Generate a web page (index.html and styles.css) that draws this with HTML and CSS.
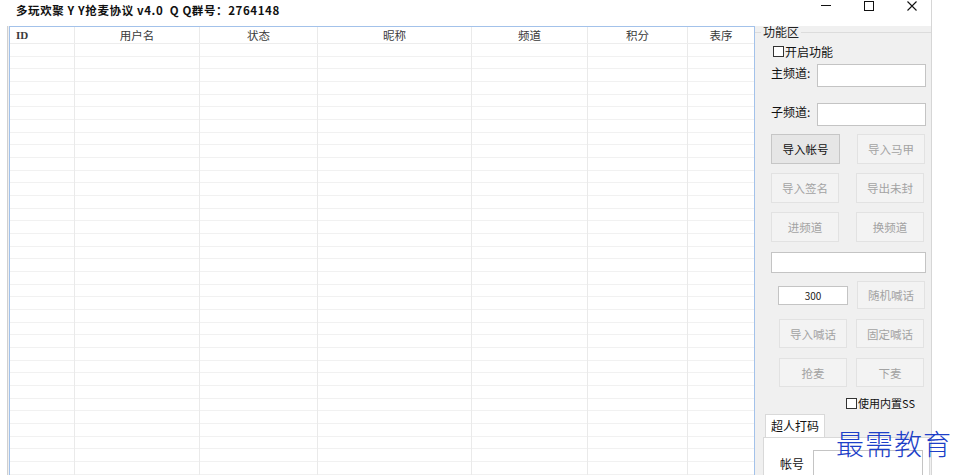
FILE: index.html
```html
<!DOCTYPE html>
<html lang="zh-CN">
<head>
    <meta charset="UTF-8">
    <title>多玩欢聚 YY抢麦协议 v4.0</title>
    <link rel="stylesheet" href="styles.css">
</head>
<body>
    <div class="window">
        <div class="titlebar">
            <div class="title">多玩欢聚 Y Y抢麦协议 v4.0&nbsp; Q Q群号：2764148</div>
            <div class="win-controls">
                <svg class="win-icon" width="10" height="10" viewBox="0 0 10 10"><path d="M0 4.5H10" stroke="#111" stroke-width="1"/></svg>
                <svg class="win-icon" width="10" height="10" viewBox="0 0 10 10"><rect x="0.5" y="0.5" width="9" height="9" fill="none" stroke="#111" stroke-width="1"/></svg>
                <svg class="win-icon" width="10" height="10" viewBox="0 0 10 10"><path d="M0.5 0.5L9.5 9.5M9.5 0.5L0.5 9.5" stroke="#111" stroke-width="1.1"/></svg>
            </div>
        </div>

        <div class="client">
            <div class="list">
                <div class="list-head">
                    <div class="col c-id head-id">ID</div>
                    <div class="col c-user">用户名</div>
                    <div class="col c-state">状态</div>
                    <div class="col c-nick">昵称</div>
                    <div class="col c-chan">频道</div>
                    <div class="col c-score">积分</div>
                    <div class="col c-order">表序</div>
                </div>
                <div class="list-body">
                    <div class="col c-id"></div>
                    <div class="col c-user"></div>
                    <div class="col c-state"></div>
                    <div class="col c-nick"></div>
                    <div class="col c-chan"></div>
                    <div class="col c-score"></div>
                    <div class="col c-order"></div>
                </div>
            </div>

            <div class="panel">
                <fieldset class="group">
                    <legend>功能区</legend>

                    <div class="check-row"><span class="box"></span>开启功能</div>

                    <div class="field-row">
                        <span class="field-label">主频道:</span>
                        <span class="textbox tb-field"></span>
                    </div>
                    <div class="field-row row-gap">
                        <span class="field-label">子频道:</span>
                        <span class="textbox tb-field"></span>
                    </div>

                    <div class="btn-row first">
                        <button class="btn on">导入帐号</button>
                        <button class="btn" disabled>导入马甲</button>
                    </div>
                    <div class="btn-row">
                        <button class="btn" disabled>导入签名</button>
                        <button class="btn" disabled>导出未封</button>
                    </div>
                    <div class="btn-row">
                        <button class="btn" disabled>进频道</button>
                        <button class="btn" disabled>换频道</button>
                    </div>

                    <span class="textbox tb-wide"></span>

                    <div class="btn-row shout">
                        <span class="textbox tb-num">300</span>
                        <button class="btn" disabled>随机喊话</button>
                    </div>
                    <div class="btn-row inset">
                        <button class="btn" disabled>导入喊话</button>
                        <button class="btn" disabled>固定喊话</button>
                    </div>
                    <div class="btn-row inset">
                        <button class="btn" disabled>抢麦</button>
                        <button class="btn" disabled>下麦</button>
                    </div>

                    <div class="check-row ss"><span class="box"></span>使用内置SS</div>
                </fieldset>

                <div class="tabs">
                    <div class="tab">超人打码</div>
                </div>
                <div class="tab-page">
                    <div class="field-row">
                        <span class="field-label short">帐号</span>
                        <span class="textbox tb-account"></span>
                    </div>
                </div>
            </div>
        </div>
    </div>

    <div class="watermark">最需教育</div>
</body>
</html>
```

FILE: styles.css
```css
* {
    box-sizing: border-box;
}

body {
    margin: 0;
    width: 958px;
    height: 475px;
    overflow: hidden;
    background: #fff;
    font-family: "Noto Sans CJK SC", "Liberation Sans", sans-serif;
    font-size: 12px;
    color: #222;
    position: relative;
}

.window {
    margin-left: 7px;
    width: 925px;
    height: 475px;
    border-right: 1px solid #d6d6d6;
    display: flex;
    flex-direction: column;
}

/* title bar */
.titlebar {
    height: 26px;
    display: flex;
    justify-content: space-between;
    align-items: flex-start;
    background: #fff;
}

.title {
    padding: 3px 0 0 9px;
    font-size: 11.5px;
    font-weight: bold;
    line-height: 14px;
    letter-spacing: 0.6px;
    color: #111;
}

.win-controls {
    display: flex;
    gap: 33px;
    padding: 1px 14px 0 0;
}

.win-icon {
    display: block;
    margin-top: 0;
}

/* client area */
.client {
    flex: 1;
    display: flex;
    border-left: 1px solid #d0d0d0;
    background: #f0f0f0;
    min-height: 0;
}

.list {
    width: 746px;
    margin-left: 1px;
    border: 1px solid #a3c2ea;
    border-bottom: none;
    background: #fff;
    display: flex;
    flex-direction: column;
}

.list-head {
    display: flex;
    height: 17px;
    border-bottom: 1px solid #ededed;
}

.list-head .col {
    text-align: center;
    font-size: 11.5px;
    line-height: 16px;
    color: #3a3a3a;
}

.list-head .head-id {
    text-align: left;
    padding-left: 6px;
    font-family: "Liberation Serif", serif;
    font-weight: bold;
    font-size: 11px;
}

.list-body {
    flex: 1;
    display: flex;
    background: repeating-linear-gradient(to bottom, #fff 0, #fff 11.67px, #f1f1f1 11.67px, #f1f1f1 12.67px);
}

.col {
    border-right: 1px solid #eaeaea;
    flex-shrink: 0;
}

.c-id { width: 65px; }
.c-user { width: 125px; }
.c-state { width: 118px; }
.c-nick { width: 154px; }
.c-chan { width: 116px; }
.c-score { width: 100px; }
.c-order { flex: 1; border-right: none; }

/* right panel */
.panel {
    width: 176px;
    display: flex;
    flex-direction: column;
}

.group {
    margin: 0;
    padding: 0;
    border: none;
    border-top: 1px solid #dcdcdc;
    min-inline-size: 0;
}

.group legend {
    margin-left: 6px;
    padding: 0 2px;
    line-height: 12px;
    color: #222;
}

.check-row {
    display: flex;
    align-items: center;
    height: 13px;
    margin-top: 7px;
    padding-left: 18px;
    line-height: 13px;
    color: #111;
}

.box {
    width: 11px;
    height: 11px;
    border: 1px solid #333;
    background: #fff;
    margin-right: 1px;
}

.check-row.ss {
    margin-top: 10px;
    padding-left: 91px;
    font-size: 11px;
}

.field-row {
    display: flex;
    align-items: flex-start;
    height: 23px;
    margin-top: 6px;
    padding-left: 16px;
}

.field-row.row-gap {
    margin-top: 16px;
}

.field-label {
    width: 46px;
    padding-top: 2px;
    line-height: 14px;
    color: #111;
}

.textbox {
    display: block;
    background: #fff;
    border: 1px solid #c4c4c4;
}

.tb-field {
    width: 109px;
    height: 23px;
}

.tb-wide {
    width: 155px;
    height: 21px;
    margin: 10px 0 0 16px;
}

.tb-num {
    width: 70px;
    height: 19px;
    text-align: center;
    font-size: 10px;
    line-height: 17px;
    color: #222;
}

.btn-row {
    display: flex;
    align-items: center;
    gap: 17px;
    height: 30px;
    margin-top: 9px;
    padding-left: 16px;
}

.btn-row.first {
    margin-top: 8px;
}

.btn-row.shout {
    gap: 9px;
    height: 28px;
    margin-top: 8px;
    padding-left: 23px;
}

.btn-row.inset {
    gap: 9px;
    height: 29px;
    margin-top: 10px;
    padding-left: 24px;
}

.btn {
    width: 68px;
    height: 100%;
    padding: 0;
    font-family: inherit;
    font-size: 11.5px;
    color: #a3a3a3;
    background: #f3f3f3;
    border: 1px solid #e2e2e2;
}

.btn-row.first .btn.on {
    width: 69px;
}

.btn.on {
    color: #111;
    background: #e6e6e6;
    border-color: #c6c6c6;
}

/* tab control */
.tabs {
    display: flex;
    margin: 4px 0 0 10px;
}

.tab {
    width: 60px;
    height: 23px;
    line-height: 22px;
    text-align: center;
    background: #fff;
    border: 1px solid #d9d9d9;
    border-bottom: none;
    color: #111;
}

.tab-page {
    flex: 1;
    width: 167px;
    margin-left: 8px;
    background: #fff;
    border: 1px solid #d9d9d9;
    border-bottom: none;
}

.tab-page .field-row {
    margin-top: 12px;
    height: 26px;
}

.field-label.short {
    width: 33px;
    padding-top: 7px;
}

.tb-account {
    width: 110px;
    height: 26px;
}

.watermark {
    position: absolute;
    left: 836px;
    top: 428px;
    font-size: 28px;
    line-height: 30px;
    font-weight: 300;
    letter-spacing: 1px;
    color: #1d3fc8;
    white-space: nowrap;
}
```
